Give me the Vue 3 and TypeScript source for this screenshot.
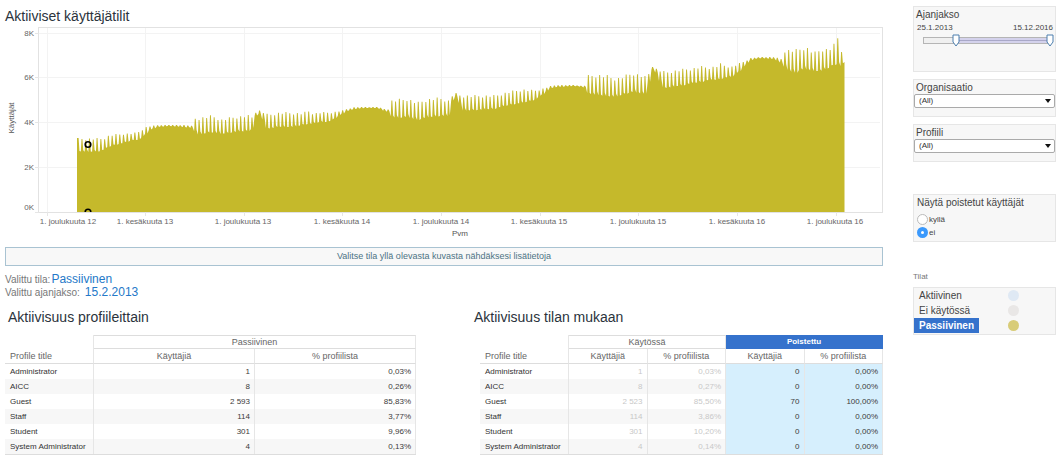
<script setup lang="ts">
import { computed, ref } from 'vue'

// Weekly envelope of the user count: [x, weekday peak y, weekend low y]
type Envelope = [number, number, number]
const envelope: Envelope[] = [
  [77, 138, 151], [90, 138, 152], [103, 138, 151], [109, 135, 147], [115, 134, 145],
  [125, 133, 143], [133, 133, 140], [140, 131, 140], [145, 127, 135], [150, 126, 130],
  [157, 125, 127], [170, 125, 126], [185, 125, 127], [193, 126, 128], [194, 118, 130],
  [200, 117, 135], [212, 115, 132], [222, 119, 134], [235, 116, 132], [250, 115, 131],
  [253, 117, 128], [255, 113, 117], [258, 110, 114], [262, 111, 114], [265, 113, 125],
  [268, 114, 129], [280, 112, 127], [295, 112, 127], [303, 113, 125], [308, 110, 124],
  [314, 113, 124], [320, 112, 122], [330, 112, 122], [340, 111, 115], [347, 109, 111],
  [355, 107, 109], [365, 107, 108], [378, 107, 108], [385, 109, 111], [389, 109, 112],
  [391, 100, 116], [398, 99, 118], [408, 98, 117], [418, 102, 120], [425, 99, 118],
  [440, 97, 116], [449, 100, 116], [451, 98, 106], [454, 93, 96], [458, 93, 97],
  [461, 96, 106], [464, 95, 111], [480, 95, 110], [495, 95, 109], [510, 91, 105],
  [523, 89, 103], [535, 90, 100], [545, 88, 93], [550, 86, 88], [557, 85, 87],
  [575, 85, 86], [584, 86, 87], [587, 84, 89], [588, 75, 93], [597, 74, 95],
  [607, 75, 96], [617, 78, 97], [625, 75, 94], [633, 72, 92], [645, 76, 94],
  [648, 75, 88], [650, 71, 76], [653, 66, 69], [657, 69, 73], [660, 70, 80],
  [662, 71, 87], [668, 71, 88], [680, 69, 86], [690, 68, 84], [702, 66, 82],
  [710, 67, 80], [718, 65, 80], [721, 63, 79], [725, 65, 78], [732, 66, 77],
  [740, 63, 71], [745, 61, 65], [751, 58, 60], [760, 57, 58], [775, 57, 59],
  [782, 59, 63], [784, 50, 66], [790, 49, 71], [797, 49, 73], [800, 48, 70],
  [806, 46, 69], [814, 52, 71], [822, 48, 71], [830, 48, 68], [834, 44, 65],
  [837, 36, 63], [839, 36, 66], [842, 51, 66], [845, 62, 66],
]

function level(x: number, k: 1 | 2): number {
  const i = Math.max(1, envelope.findIndex((p) => p[0] >= x))
  const a = envelope[i - 1]
  const b = envelope[i]
  return a[k] + ((b[k] - a[k]) * (x - a[0])) / (b[0] - a[0])
}

const week = 3.779
const areaPath = computed(() => {
  const pts: string[] = ['77,212', `77,${level(77, 1)}`]
  for (let i = 0; i <= 202; i++) {
    const x = 78.3 + i * week
    const top = level(x, 1)
    const low = level(x, 2)
    const wobble = ((i * 7) % 5) * 0.04 * (low - top)
    const rows: [number, number][] = [
      [x - 1.3, low], [x - 0.6, top + wobble], [x + 0.3, top + wobble], [x + 1.2, low - wobble],
    ]
    for (const [px, py] of rows) {
      if (px > 77 && px < 844) pts.push(`${px.toFixed(1)},${py.toFixed(1)}`)
    }
  }
  pts.push('844.5,62', '844.5,212')
  return `M${pts.join('L')}Z`
})

const yTicks = [
  { label: '8K', y: 33, ty: 36 },
  { label: '6K', y: 77, ty: 80 },
  { label: '4K', y: 122, ty: 125 },
  { label: '2K', y: 167, ty: 170 },
  { label: '0K', y: 212, ty: 210 },
]
const xTicks = [
  { label: '1. joulukuuta 12', x: 47, tx: 68 },
  { label: '1. kesäkuuta 13', x: 145, tx: 145 },
  { label: '1. joulukuuta 13', x: 244, tx: 243 },
  { label: '1. kesäkuuta 14', x: 342, tx: 342 },
  { label: '1. joulukuuta 14', x: 441, tx: 441 },
  { label: '1. kesäkuuta 15', x: 540, tx: 539 },
  { label: '1. joulukuuta 15', x: 638, tx: 638 },
  { label: '1. kesäkuuta 16', x: 737, tx: 737 },
  { label: '1. joulukuuta 16', x: 836, tx: 835 },
]

const profiles = [
  { name: 'Administrator', values: ['1', '0,03%'] },
  { name: 'AICC', values: ['8', '0,26%'] },
  { name: 'Guest', values: ['2 593', '85,83%'] },
  { name: 'Staff', values: ['114', '3,77%'] },
  { name: 'Student', values: ['301', '9,96%'] },
  { name: 'System Administrator', values: ['4', '0,13%'] },
]
const states = [
  { name: 'Administrator', used: ['1', '0,03%'], removed: ['0', '0,00%'] },
  { name: 'AICC', used: ['8', '0,27%'], removed: ['0', '0,00%'] },
  { name: 'Guest', used: ['2 523', '85,50%'], removed: ['70', '100,00%'] },
  { name: 'Staff', used: ['114', '3,86%'], removed: ['0', '0,00%'] },
  { name: 'Student', used: ['301', '10,20%'], removed: ['0', '0,00%'] },
  { name: 'System Administrator', used: ['4', '0,14%'], removed: ['0', '0,00%'] },
]

const legend = [
  { name: 'Aktiivinen', tone: 'blue' },
  { name: 'Ei käytössä', tone: 'grey' },
  { name: 'Passiivinen', tone: 'olive' },
]
const selected = ref('Passiivinen')
const showRemoved = ref('ei')
const organisation = ref('(All)')
const profile = ref('(All)')
const from = ref(26)
const to = ref(100)
</script>

<template>
  <div class="page">
    <main class="main">
      <h1>Aktiiviset käyttäjätilit</h1>
      <svg class="chart" viewBox="5 24 878 216" role="img" aria-label="Aktiiviset käyttäjätilit">
        <defs>
          <clipPath id="plot"><rect x="38" y="27" width="845" height="185" /></clipPath>
        </defs>
        <g class="grid">
          <line v-for="t in yTicks" :key="t.label" x1="39" x2="880" :y1="t.y + 0.5" :y2="t.y + 0.5" />
          <line v-for="t in xTicks" :key="t.label" y1="28" y2="212" :x1="t.x + 0.5" :x2="t.x + 0.5" />
        </g>
        <g class="axis">
          <rect x="38.5" y="27.5" width="844" height="185" />
          <line v-for="t in yTicks" :key="t.label" x1="35" x2="39" :y1="t.y + 0.5" :y2="t.y + 0.5" />
          <line v-for="t in xTicks" :key="t.label" y1="212" y2="216" :x1="t.x + 0.5" :x2="t.x + 0.5" />
        </g>
        <path class="area" :d="areaPath" />
        <g class="marks" clip-path="url(#plot)">
          <circle cx="88" cy="144.5" r="2.8" />
          <circle cx="88" cy="212" r="2.8" />
        </g>
        <g class="y-labels">
          <text v-for="t in yTicks" :key="t.label" x="34" :y="t.ty">{{ t.label }}</text>
        </g>
        <g class="x-labels">
          <text v-for="t in xTicks" :key="t.label" :x="t.tx" y="224">{{ t.label }}</text>
          <text class="axis-title" x="460" y="236">Pvm</text>
          <text class="axis-title" transform="translate(14 118) rotate(-90)">Käyttäjät</text>
        </g>
      </svg>

      <p class="banner">Valitse tila yllä olevasta kuvasta nähdäksesi lisätietoja</p>

      <dl class="picked">
        <div class="picked-state"><dt>Valittu tila:</dt><dd>Passiivinen</dd></div>
        <div class="picked-time"><dt>Valittu ajanjakso:</dt><dd>15.2.2013</dd></div>
      </dl>

      <div class="tables">
        <section>
          <h2 class="first-title">Aktiivisuus profiileittain</h2>
          <table class="by-profile">
            <colgroup><col class="name-col" /><col /><col /></colgroup>
            <thead>
              <tr><td class="blank"></td><th class="group" colspan="2">Passiivinen</th></tr>
              <tr><th class="name-head">Profile title</th><th>Käyttäjiä</th><th>% profiilista</th></tr>
            </thead>
            <tbody>
              <tr v-for="r in profiles" :key="r.name">
                <th scope="row">{{ r.name }}</th>
                <td v-for="(v, i) in r.values" :key="i">{{ v }}</td>
              </tr>
            </tbody>
          </table>
        </section>
        <section>
          <h2>Aktiivisuus tilan mukaan</h2>
          <div class="indent">
            <table class="by-state">
              <colgroup><col class="name-col" /><col /><col /><col /><col /></colgroup>
              <thead>
                <tr>
                  <td class="blank"></td>
                  <th class="group" colspan="2">Käytössä</th>
                  <th class="group active" colspan="2">Poistettu</th>
                </tr>
                <tr>
                  <th class="name-head">Profile title</th>
                  <th>Käyttäjiä</th><th>% profiilista</th><th>Käyttäjiä</th><th>% profiilista</th>
                </tr>
              </thead>
              <tbody>
                <tr v-for="r in states" :key="r.name">
                  <th scope="row">{{ r.name }}</th>
                  <td v-for="(v, i) in r.used" :key="'u' + i" class="faded">{{ v }}</td>
                  <td v-for="(v, i) in r.removed" :key="'r' + i" class="lit">{{ v }}</td>
                </tr>
              </tbody>
            </table>
          </div>
        </section>
      </div>
    </main>

    <aside class="side">
      <section class="panel period">
        <h3>Ajanjakso</h3>
        <div class="dates">
          <label for="from">25.1.2013</label>
          <label for="to">15.12.2016</label>
        </div>
        <div class="slider">
          <div class="track"><div class="fill" :style="{ left: from + '%', right: 100 - to + '%' }"></div></div>
          <svg v-for="(v, i) in [from, to]" :key="i" class="handle" :style="{ left: v + '%' }" viewBox="0 0 8 13">
            <path d="M1 1H7V8L4 12L1 8Z" />
          </svg>
          <input id="from" v-model.number="from" type="range" min="0" max="100" />
          <input id="to" v-model.number="to" type="range" min="0" max="100" />
        </div>
      </section>

      <section class="panel choice">
        <label for="org">Organisaatio</label>
        <div class="select-box">
          <select id="org" v-model="organisation"><option>(All)</option></select>
          <svg class="caret" viewBox="0 0 6 4"><path d="M0 0H6L3 4Z" /></svg>
        </div>
      </section>

      <section class="panel choice">
        <label for="profile">Profiili</label>
        <div class="select-box">
          <select id="profile" v-model="profile"><option>(All)</option></select>
          <svg class="caret" viewBox="0 0 6 4"><path d="M0 0H6L3 4Z" /></svg>
        </div>
      </section>

      <fieldset class="panel removed">
        <legend>Näytä poistetut käyttäjät</legend>
        <label><input v-model="showRemoved" type="radio" name="removed" value="kyllä" />kyllä</label>
        <label><input v-model="showRemoved" type="radio" name="removed" value="ei" />ei</label>
      </fieldset>

      <h4>Tilat</h4>
      <ul class="panel states">
        <li v-for="s in legend" :key="s.name">
          <button type="button" :class="{ on: s.name === selected }" @click="selected = s.name">{{ s.name }}</button>
          <span class="dot" :class="s.tone"></span>
        </li>
      </ul>
    </aside>
  </div>
</template>

<style>
body {
  background: #fff;
}
</style>

<style scoped>
.page {
  display: flex;
  gap: 30px;
  padding: 6px 4px 0 5px;
  font-family: "Liberation Sans", Arial, sans-serif;
  font-size: 8px;
  line-height: 10px;
  color: #444;
}
.page *,
.page *::before {
  box-sizing: border-box;
}
h1, h2, h3, h4, p, dl, dd, ul {
  margin: 0;
  padding: 0;
}
.main {
  flex: 1;
  min-width: 0;
}
h1, h2 {
  font-size: 14px;
  font-weight: 400;
  line-height: 18px;
  color: #2b333c;
}
h1 {
  padding-top: 2px;
  line-height: 16px;
}
.chart {
  display: block;
  width: 100%;
  height: auto;
}
.grid line {
  stroke: #f3f3f3;
}
.axis rect {
  fill: none;
  stroke: #e2e2e2;
}
.axis line {
  stroke: #e6e6e6;
}
.area {
  fill: #c5b92b;
}
.marks circle {
  fill: none;
  stroke: #000;
  stroke-width: 1.6;
}
.chart text {
  font-size: 8px;
  fill: #666;
}
.chart .axis-title {
  fill: #555;
}
.y-labels {
  text-anchor: end;
}
.x-labels {
  text-anchor: middle;
}
.banner {
  margin-top: 7px;
  height: 19px;
  border: 1px solid #a9c3d2;
  background: #f8f8f8;
  color: #4c7384;
  font-size: 9px;
  line-height: 17px;
  text-align: center;
}
.picked {
  margin-top: 7px;
  font-size: 10px;
  line-height: 13px;
  color: #777;
}
.picked div {
  display: flex;
  align-items: baseline;
  gap: 1px;
}
.picked .picked-time {
  gap: 5px;
}
.picked dd {
  font-size: 12px;
  color: #2478c8;
}
.tables {
  display: grid;
  grid-template-columns: 411fr 409fr;
  gap: 58px;
  margin-top: 9px;
}
.first-title {
  padding-left: 3px;
}
.indent {
  padding-left: 6px;
}
table {
  width: 100%;
  margin-top: 9px;
  table-layout: fixed;
  border-collapse: separate;
  border-spacing: 0;
  border-bottom: 1px solid #ddd;
}
.name-col {
  width: 89px;
}
tr {
  height: 15px;
}
thead tr:first-child {
  height: 14px;
}
th, td {
  padding: 0 4px 1px 0;
  font-weight: 400;
  line-height: 13px;
  text-align: right;
  color: #3c3c3c;
  border-right: 1px solid #e6e6e6;
}
thead th {
  padding: 0;
  font-size: 9px;
  line-height: 12px;
  text-align: center;
  color: #666;
  border-bottom: 1px solid #ddd;
}
thead .group {
  border-top: 1px solid #ddd;
}
thead .active {
  background: #3572cc;
  border-color: #3572cc;
  color: #fff;
  font-size: 8px;
  font-weight: 700;
}
thead .name-head,
tbody th {
  padding-left: 5px;
  text-align: left;
  white-space: nowrap;
}
tbody th {
  color: #333;
}
tbody tr:nth-child(even) {
  background: #f7f7f7;
}
td.faded {
  color: #c8c8c8;
}
.lit {
  background: #d6effd;
}
.side {
  flex: none;
  width: 143px;
}
.panel {
  margin: 0 0 7px;
  border: 1px solid #e6e6e6;
  background: #f7f7f7;
}
h3,
.choice > label,
legend {
  display: block;
  padding: 0 2px;
  font-size: 10px;
  font-weight: 400;
  line-height: 12px;
  color: #444;
}
.period {
  height: 66px;
  padding-top: 2px;
}
.dates {
  display: flex;
  justify-content: space-between;
  padding: 2px 2px 0 3px;
}
.slider {
  position: relative;
  height: 13px;
  margin: 1px 5px 0 9px;
}
.track {
  position: relative;
  top: 3px;
  height: 7px;
  border: 1px solid #b5b5b5;
  background: #f0f0f0;
}
.fill {
  position: absolute;
  top: 0;
  bottom: 0;
  background: linear-gradient(#d4d2ec 40%, #a9a8c8 40%, #a9a8c8 60%, #d4d2ec 60%);
}
.handle {
  position: absolute;
  top: 0;
  width: 8px;
  height: 13px;
  margin-left: -4px;
  fill: #fff;
  stroke: #4d7fae;
}
.slider input {
  position: absolute;
  top: 0;
  left: 0;
  width: 50%;
  height: 100%;
  margin: 0;
  opacity: 0;
}
.slider input + input {
  left: 50%;
}
.choice {
  height: 38px;
  padding-top: 2px;
}
.select-box {
  position: relative;
}
select {
  display: block;
  width: 100%;
  height: 14px;
  padding: 0 4px;
  border: 1px solid #aaa;
  border-radius: 2px;
  appearance: none;
  background: #fff;
  font: inherit;
  color: #333;
}
.caret {
  position: absolute;
  top: 5px;
  right: 4px;
  width: 6px;
  height: 4px;
  fill: #111;
  pointer-events: none;
}
.removed {
  height: 48px;
  min-width: 0;
  margin-top: 32px;
  padding: 0 3px;
}
.removed legend {
  float: left;
  width: 100%;
  margin: 2px 0 4px;
  padding: 0;
}
.removed label {
  clear: both;
  display: flex;
  align-items: center;
  height: 13px;
}
.removed input {
  width: 11px;
  height: 11px;
  margin: 0 1px 0 0;
  border: 1px solid #bbb;
  border-radius: 50%;
  appearance: none;
  background: #fff;
}
.removed input:checked {
  border: 4px solid #3b99fc;
}
h4 {
  margin: 30px 0 5px;
  font-size: 8px;
  font-weight: 400;
  color: #777;
}
.states {
  height: 48px;
  list-style: none;
}
.states li {
  display: flex;
  align-items: center;
  height: 15px;
}
.states button {
  height: 15px;
  padding: 0 5px;
  border: 0;
  background: none;
  font-family: inherit;
  font-size: 10px;
  line-height: 15px;
  color: #444;
}
.states .on {
  background: #3572cc;
  font-weight: 700;
  color: #fff;
}
.dot {
  width: 11px;
  height: 11px;
  margin: 0 36px 0 auto;
  border-radius: 50%;
}
.blue { background: #dfe9f4; }
.grey { background: #e9e7e6; }
.olive { background: #d8cc78; }
</style>
